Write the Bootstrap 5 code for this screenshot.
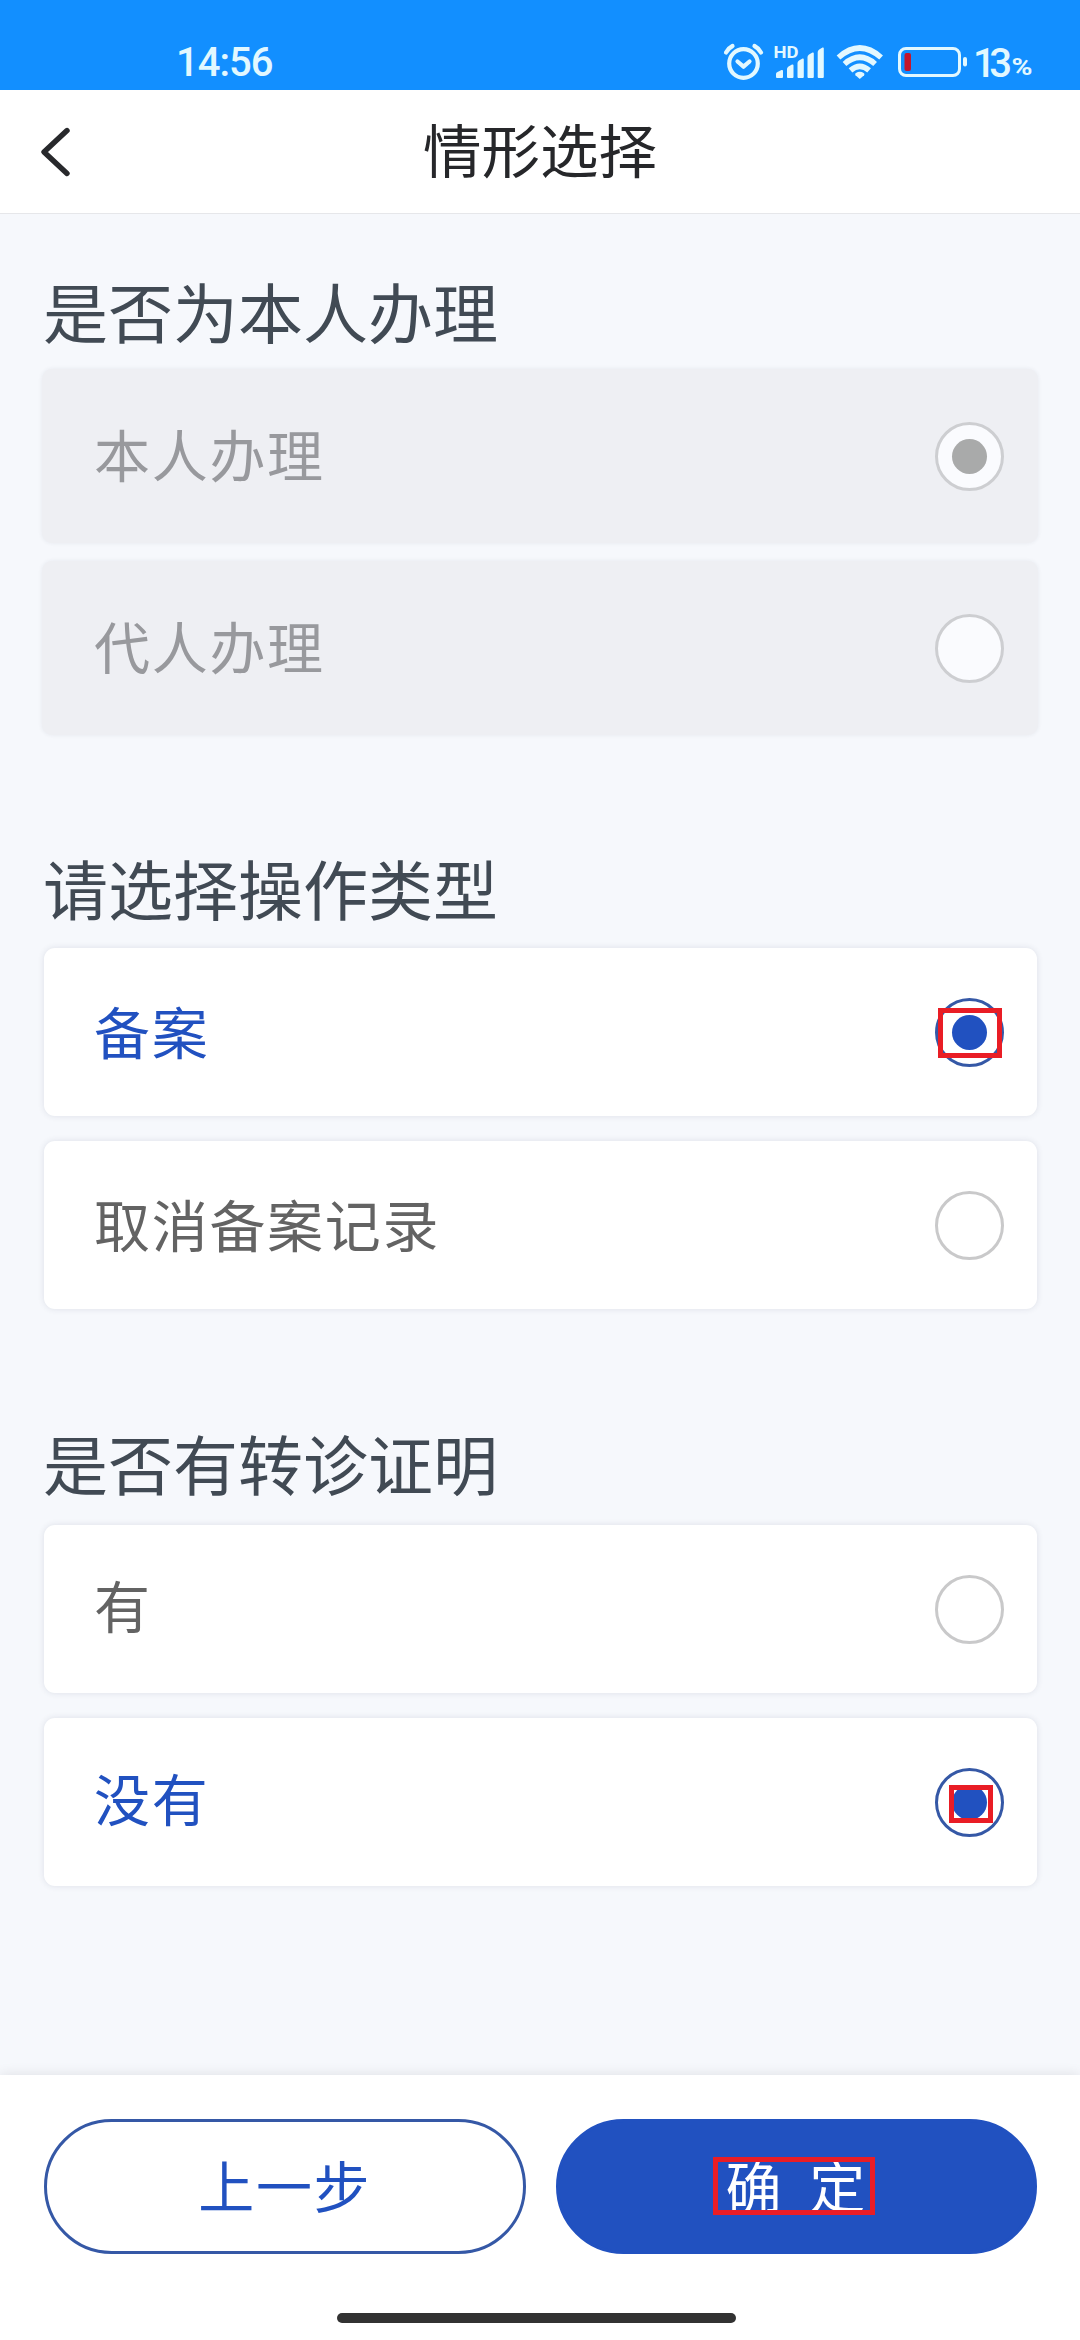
<!DOCTYPE html>
<html lang="zh-CN">
<head>
<meta charset="utf-8">
<meta name="viewport" content="width=device-width, initial-scale=1">
<title>情形选择</title>
<link href="https://cdn.jsdelivr.net/npm/bootstrap@5.3.0/dist/css/bootstrap.min.css" rel="stylesheet">
<style>
  :root { --brand: #2151c0; --ink: #414a54; --tick: #e91d25; }
  body { width: 1080px; height: 2340px; overflow: hidden; background: #f6f8fc; font-family: "Noto Sans CJK SC", sans-serif; }
  .status-bar { height: 90px; background: #128fff; color: #e2f8ff; padding: 20px 47px 0 176px; font-family: Roboto, sans-serif; }
  .clock { font-size: 40px; line-height: 86px; height: 70px; font-weight: 500; letter-spacing: -1px; }
  .title-bar { height: 124px; border-bottom: 1px solid #e6e7ea; color: #26272a; }
  .title-bar h1 { font-size: 58.5px; line-height: 116px; padding-bottom: 8px; font-weight: 400; }
  .back { width: 113px; padding-left: 38px; }
  .question { padding: 0 43px; }
  .question h2 { font-size: 65px; line-height: 90px; font-weight: 400; color: var(--ink); margin: 0; white-space: nowrap; }
  .choices { gap: 25px; }
  .choice { height: 168px; padding: 0 33px 0 50px; margin: 0 0 0 1px; border-radius: 11px; background: #fff; color: #636363; font-size: 56px; letter-spacing: 1.7px; line-height: 84px; box-shadow: 0 0 6px rgba(40,50,80,.12); }
  .choice.picked { color: var(--brand); }
  .locked .choices { gap: 18px; }
  .locked .choice { height: 174px; margin: 0 -1px; padding: 0 34px 0 52px; background: #eeeff3; color: #98999d; border-radius: 10px; box-shadow: 0 0 4px rgba(40,50,80,.08); }
  .dial { width: 69px; height: 69px; border: 3px solid #c9c9ca; border-radius: 50%; position: relative; }
  .locked .dial { background: #fafbfe; border-color: #cdced1; }
  .dial i { width: 35px; height: 35px; border-radius: 50%; background: #a9aaaa; }
  .picked .dial { border-color: #3558a6; }
  .picked .dial i { background: var(--brand); }
  .marker { position: absolute; border: 5px solid var(--tick); }
  .marker-a { width: 64px; height: 50px; left: 0; top: 7px; }
  .marker-b { width: 44px; height: 38px; left: 11px; top: 14px; }
  .marker-c { width: 162px; height: 58px; left: 154px; top: 35px; }
  .q1 { padding-top: 51px; } .q2 { padding-top: 107px; } .q3 { padding-top: 108px; }
  .q1 h2 { height: 104px; } .q2 h2 { height: 106px; } .q3 h2 { height: 108px; }
  .q1 .label-text { padding-bottom: 7px; } .q2 .label-text { padding-bottom: 5px; } .q3 .label-text { padding-bottom: 10px; }
  .actions { height: 265px; padding: 44px 43px 0 44px; background: #fff; box-shadow: 0 -1px 12px rgba(0,0,0,.09); }
  .button-row { gap: 30px; }
  .actions .btn { height: 135px; border: 3px solid #3558a6; font-size: 56px; letter-spacing: 1.7px; line-height: 84px; padding: 0 0 6px; color: var(--brand); position: relative; }
  .actions .btn-main { background: var(--brand); border-color: var(--brand); color: #fff; }
  .spread { margin-right: 26px; }
  .home { width: 399px; height: 10px; border-radius: 5px; background: #323232; margin: 59px 0 0 293px; }
</style>
</head>
<body class="d-flex flex-column">
<header>
  <div class="status-bar d-flex justify-content-between">
    <span class="clock">14:56</span>
    <svg width="320" height="70" viewBox="712 20 320 70" fill="#e2f8ff">
      <g fill="none" stroke="#e2f8ff" stroke-width="4.2" stroke-linecap="round" stroke-linejoin="round">
        <circle cx="742.5" cy="63.5" r="14.3"/>
        <path d="M736.5 61.5l6 5.2 6-5.2M725 52.5q2.5-4.5 6.500-6.500M760 52.500q-2.500-4.500-6.500-6.500"/>
      </g>
      <text x="772.500" y="58" font-size="17" font-weight="700" textLength="25" lengthAdjust="spacingAndGlyphs">HD</text>
      <path d="M775 74q0-1.500 1.500-2l4-2q1.500-.5 1.500 1v6q0 1-1 1h-5q-1 0-1-1zM786 69q0-1.500 1.500-2.500l3.500-2q1.500-.5 1.500 1V77q0 1-1 1H787q-1 0-1-1zM796.500 63q0-1.500 1.500-2.500l3.500-2q1.300-.5 1.300 1V77q0 1-1 1h-4.300q-1 0-1-1zM806.500 57q0-1.500 1.500-2.500l3.500-2q1.300-.5 1.300 1V77q0 1-1 1h-4.300q-1 0-1-1zM816.700 52q0-1.500 1.500-2.500l3.300-2q1.300-.5 1.300 1V77q0 1-1 1h-4.100q-1 0-1-1z"/>
      <path d="M858.800 79l-4.300-3.800q-1-1.200.4-2.200 3.900-2.600 7.800 0 1.400 1 .4 2.200z"/>
      <g fill="none" stroke="#e2f8ff" stroke-width="5.600">
        <path d="M837.500 57.500q21.300-19 42.600 0"/>
        <path d="M843.500 64q15.300-13.500 30.600 0"/>
        <path d="M849.500 70.300q9.300-8 18.600 0"/>
      </g>
      <rect x="898.500" y="48.500" width="60" height="27" rx="6.500" fill="none" stroke="#e2f8ff" stroke-width="3"/>
      <rect x="962" y="57" width="4" height="9.500" rx="2"/>
      <rect x="903.500" y="53" width="6.500" height="18" rx="2" fill="#c4162c"/>
      <text x="972" y="76.500" font-size="40" font-weight="500" textLength="39">13</text>
      <text x="1010.500" y="75" font-size="24" font-weight="700" textLength="21" lengthAdjust="spacingAndGlyphs">%</text>
    </svg>
  </div>
  <div class="title-bar bg-white d-flex align-items-center">
    <div class="back"><svg class="d-block" width="34" height="52" viewBox="0 0 34 52" fill="none" stroke="#28292c" stroke-width="5.400" stroke-linecap="round" stroke-linejoin="round"><path d="M29 4.500L6 26l23 21.500"/></svg></div>
    <h1 class="flex-grow-1 text-center m-0">情形选择</h1>
    <div class="back"></div>
  </div>
</header>
<main class="flex-grow-1">
  <section class="question locked q1">
    <h2>是否为本人办理</h2>
    <div class="choices d-flex flex-column">
      <div class="choice d-flex align-items-center justify-content-between"><span class="label-text">本人办理</span><span class="dial d-flex align-items-center justify-content-center"><i></i></span></div>
      <div class="choice d-flex align-items-center justify-content-between"><span class="label-text">代人办理</span><span class="dial"></span></div>
    </div>
  </section>
  <section class="question q2">
    <h2>请选择操作类型</h2>
    <div class="choices d-flex flex-column">
      <div class="choice picked d-flex align-items-center justify-content-between"><span class="label-text">备案</span><span class="dial d-flex align-items-center justify-content-center"><i></i><b class="marker marker-a"></b></span></div>
      <div class="choice d-flex align-items-center justify-content-between"><span class="label-text">取消备案记录</span><span class="dial"></span></div>
    </div>
  </section>
  <section class="question q3">
    <h2>是否有转诊证明</h2>
    <div class="choices d-flex flex-column">
      <div class="choice d-flex align-items-center justify-content-between"><span class="label-text">有</span><span class="dial"></span></div>
      <div class="choice picked d-flex align-items-center justify-content-between"><span class="label-text">没有</span><span class="dial d-flex align-items-center justify-content-center"><i></i><b class="marker marker-b"></b></span></div>
    </div>
  </section>
</main>
<footer>
  <div class="actions">
    <div class="button-row d-flex">
      <button type="button" class="btn rounded-pill flex-fill w-50">上一步</button>
      <button type="button" class="btn btn-main rounded-pill flex-fill w-50"><span class="spread">确</span>定<b class="marker marker-c"></b></button>
    </div>
    <div class="home"></div>
  </div>
</footer>
<script src="https://cdn.jsdelivr.net/npm/bootstrap@5.3.0/dist/js/bootstrap.bundle.min.js"></script>
</body>
</html>
